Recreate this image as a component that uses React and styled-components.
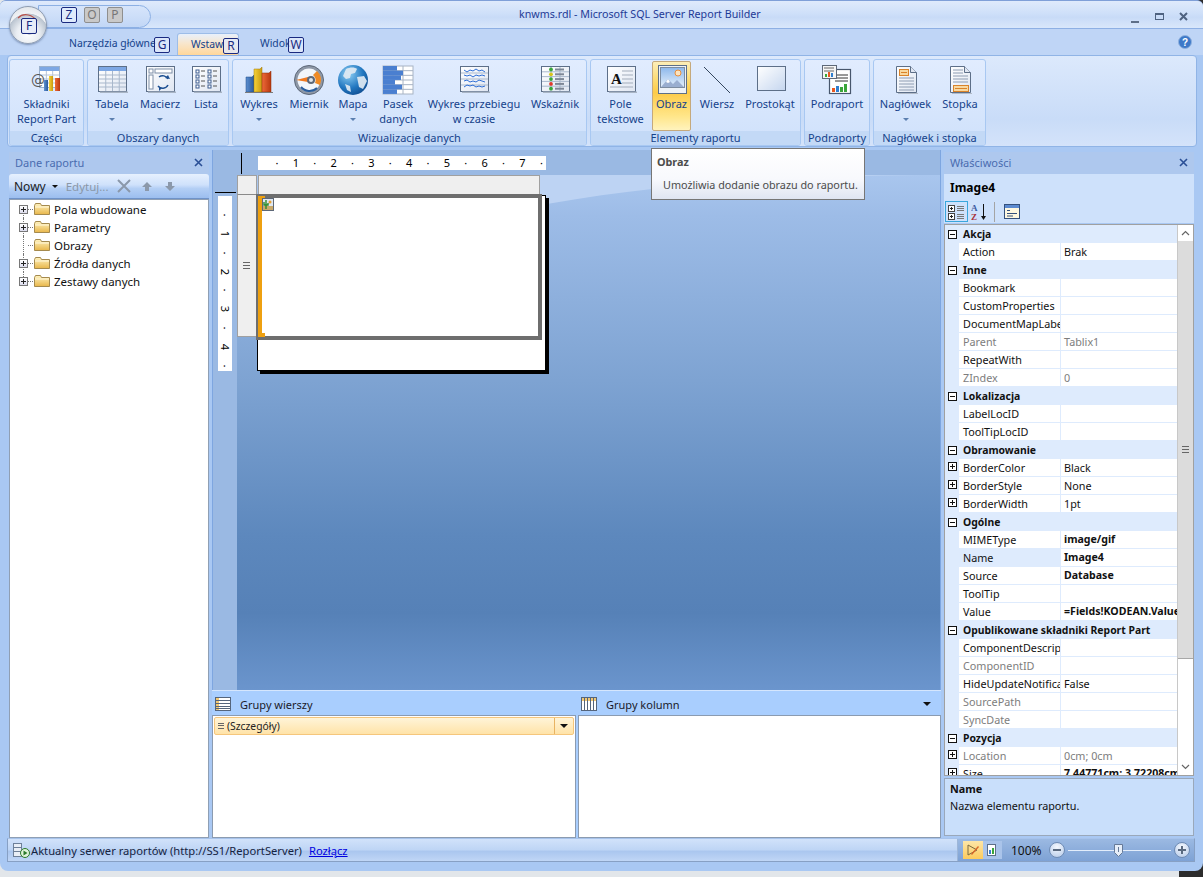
import React from 'react'
import styled, { createGlobalStyle } from 'styled-components'

const GlobalStyle = createGlobalStyle`
  html, body { margin: 0; padding: 0; background: linear-gradient(90deg, #e2e6ea 0, #e2e6ea 98%, #2c2c2c 98%); }
  body { font-family: "Noto Sans", "DejaVu Sans", sans-serif; font-size: 11px; overflow: hidden; }
  * { box-sizing: border-box; }
`

const Win = styled.div`
  width: 1203px;
  height: 871px;
  position: relative;
  overflow: hidden;
  background: #a9c8f3;
  border-radius: 6px 6px 8px 8px;
  border-top: 1px solid #7f9fd8;
  display: flex;
  flex-direction: column;
`

/* title bar */
const TitleBar = styled.div`
  height: 28px;
  flex: none;
  display: flex;
  background: linear-gradient(#dfeafc 0%, #cfe0f9 45%, #c8dbf7 60%, #d9e7fb 100%);
  border-bottom: 1px solid #8eb0e4;
`
const Qat = styled.div`
  margin: 4px 0 0 38px;
  width: 113px;
  height: 23px;
  border: 1px solid #8cb0e4;
  border-radius: 0 12px 12px 0;
  background: linear-gradient(#d7e5fb, #c2d7f6);
  display: flex;
  gap: 7px;
  padding: 1px 0 0 22px;
`
const KeyTip = styled.span`
  width: 16px;
  height: 16px;
  flex: none;
  display: flex;
  align-items: center;
  justify-content: center;
  font-size: 12px;
  line-height: 1;
  border: 1px solid ${p => (p.$off ? '#8f8f8f' : '#1a2a80')};
  border-radius: 2px;
  color: ${p => (p.$off ? '#777' : '#1a2a80')};
  background: ${p => (p.$off ? '#c9c9c9' : 'rgba(226,236,252,.85)')};
`
const OrbTip = styled(KeyTip)`
  position: absolute;
  left: 11px;
  top: 11px;
  background: rgba(232,236,248,.9);
`
const Orb = styled.div`
  position: absolute;
  left: 9px;
  top: 5px;
  width: 38px;
  height: 38px;
  border-radius: 50%;
  border: 1px solid #8e9cb0;
  background: radial-gradient(circle at 50% 75%, #ffffff 0%, #e9edf2 35%, #b9c3cf 62%, #f0f2f5 64%, #d8dde3 100%);
  box-shadow: 0 1px 2px rgba(60,80,120,.5);
  z-index: 3;
`
const TitleText = styled.div`
  margin: 5px 0 0 368px;
  width: 300px;
  font-size: 10.7px;
  line-height: 16px;
  color: #1e3a96;
  white-space: nowrap;
`
const WinButtons = styled.div`
  margin-left: auto;
  display: flex;
  gap: 12px;
  padding: 11px 13px 0 0;
`

/* tabs */
const TabStrip = styled.div`
  height: 26px;
  flex: none;
  display: flex;
  align-items: flex-end;
  padding: 0 11px 0 59px;
  background: #bfd5f6;
  position: relative;
`
const Tab = styled.div`
  position: relative;
  width: ${p => p.$w}px;
  height: 22px;
  padding: 3px 0 0 ${p => p.$pad}px;
  color: #15428b;
  font-size: 10.4px;
  line-height: 15px;
  white-space: nowrap;
  ${p => p.$active && `
    border: 1px solid #9dbde8;
    border-bottom: none;
    border-radius: 3px 3px 0 0;
    background: linear-gradient(#e8f0fc 0%, #f8e6cc 45%, #ffd79b 100%);
  `}
`
const TabTip = styled(KeyTip)`
  position: absolute;
  top: 4px;
  left: ${p => p.$x}px;
  background: rgba(226,234,250,.8);
`
const Help = styled.div`
  margin-left: auto;
  align-self: center;
`

/* ribbon */
const Ribbon = styled.div`
  height: 92px;
  flex: none;
  margin: 0 6px 0 7px;
  padding: 3px 0 0 1px;
  display: flex;
  gap: 3px;
  border: 1px solid #90b4e6;
  border-radius: 4px;
  background: linear-gradient(#dce9fc, #c9dcf8 70%, #d4e3fa);
`
const Group = styled.div`
  width: ${p => p.$w}px;
  height: 87px;
  flex: none;
  display: flex;
  flex-direction: column;
  border: 1px solid #a8c8f2;
  border-radius: 3px;
  background: linear-gradient(#e1ecfe, #cfe1fb);
  overflow: hidden;
`
const GroupBody = styled.div`
  flex: 1;
  display: flex;
  padding-top: 1px;
`
const GroupLabel = styled.div`
  height: 15px;
  flex: none;
  text-align: center;
  color: #15428b;
  font-size: 11px;
  line-height: 14px;
  background: #c3d9f6;
  white-space: nowrap;
`
const RibbonBtn = styled.div`
  width: ${p => p.$w}px;
  height: 70px;
  flex: none;
  margin-right: ${p => p.$mr || 0}px;
  display: flex;
  flex-direction: column;
  align-items: center;
  padding-top: 3px;
  color: #15428b;
  font-size: 11px;
  line-height: 15px;
  text-align: center;
  white-space: nowrap;
  ${p => p.$on && `
    border: 1px solid #c5a97c;
    border-radius: 2px;
    background: linear-gradient(#fdeeb8 0%, #fdd868 30%, #fdcb48 45%, #ffe68a 80%, #fff3bd 100%);
    padding-top: 2px;
  `}
`
const BtnIcon = styled.div`
  width: 32px;
  height: 32px;
  flex: none;
`
const Caret = styled.span`
  display: block;
  width: 0;
  height: 0;
  margin-top: 7px;
  border: 3px solid transparent;
  border-top: 3px solid #5b7faf;
  border-bottom: none;
`

/* main */
const Main = styled.div`
  height: 688px;
  flex: none;
  margin-top: 3px;
  padding-left: 9px;
  display: flex;
  gap: 3px;
`
const SidePanel = styled.div`
  width: ${p => p.$w}px;
  flex: none;
  display: flex;
  flex-direction: column;
`
const PanelHead = styled.div`
  height: 22px;
  margin-top: 2px;
  flex: none;
  display: flex;
  align-items: center;
  justify-content: space-between;
  padding: 0 6px 2px;
  color: #4a6cb0;
  font-size: 11px;
  background: #aec8ee;
`
const DataBar = styled.div`
  height: 25px;
  flex: none;
  display: flex;
  align-items: center;
  padding-left: 5px;
  border-radius: 3px 3px 0 0;
  border-bottom: 1px solid #6f93c9;
  background: linear-gradient(#e6f0fe 0%, #cfe1fb 45%, #b4cff5 60%, #9cbeef 100%);
  color: #1c1c1c;
  font-size: 12px;
`
const BarOff = styled.span`
  color: #8a97a8;
  font-size: 11.5px;
  margin: 0 ${p => p.$mr || 0}px 0 ${p => p.$ml || 0}px;
  display: flex;
`
const Tree = styled.div`
  flex: 1;
  background: #fff;
  border: 1px solid #8f9fb4;
`
const TreeRow = styled.div`
  height: 18px;
  display: flex;
  align-items: center;
  padding-left: 9px;
  color: #111;
  font-size: 11.5px;
  position: relative;
  &::before {
    content: '';
    position: absolute;
    left: 13px;
    top: ${p => (p.$first ? 9 : 0)}px;
    height: ${p => (p.$last || p.$first ? 9 : 18)}px;
    border-left: 1px dotted #777;
  }
`
const Expander = styled.span`
  width: 9px;
  height: 9px;
  flex: none;
  display: block;
  border: 1px solid #777;
  background: linear-gradient(#fff, #dde);
  position: relative;
  z-index: 1;
  visibility: ${p => (p.$hide ? 'hidden' : 'visible')};
  &::before { content: ''; position: absolute; left: 1px; top: 3px; width: 5px; height: 1px; background: #222; }
  &::after { content: ''; position: absolute; left: 3px; top: 1px; width: 1px; height: 5px; background: #222; }
`
const TreeDots = styled.span`
  width: 5px;
  border-top: 1px dotted #777;
`
const TreeLabel = styled.span`
  margin-left: 3px;
  white-space: nowrap;
`

/* centre */
const Centre = styled.div`
  width: 729px;
  flex: none;
  display: flex;
  flex-direction: column;
`
const Surface = styled.div`
  height: 540px;
  flex: none;
  display: flex;
  flex-direction: column;
  background: #9ab9e3;
  border-right: 1px solid #7ea6e0;
  border-left: 1px solid #7ea6e0;
`
const TopStrip = styled.div`
  height: 25px;
  flex: none;
  display: flex;
  align-items: flex-start;
`
const VMark = styled.div`
  width: 1px;
  height: 21px;
  margin: 3px 16px 0 28px;
  background: #000;
`
const HRuler = styled.div`
  width: 288px;
  height: 14px;
  margin-top: 6px;
  flex: none;
  overflow: hidden;
  background: #fff;
  display: flex;
  padding-left: 9.45px;
`
const Tick = styled.div`
  flex: none;
  width: 18.9px;
  height: 14px;
  display: flex;
  align-items: center;
  justify-content: center;
  font-size: 11px;
  line-height: 14px;
  color: #000;
`
const SurfaceBody = styled.div`
  flex: 1;
  display: flex;
`
const LeftStrip = styled.div`
  width: 24px;
  flex: none;
`
const HMark = styled.div`
  width: 21px;
  height: 1px;
  margin: 17px 0 3px 2px;
  background: #000;
`
const VRuler = styled.div`
  width: 14px;
  height: 175px;
  margin-left: 5px;
  overflow: hidden;
  background: #fff;
  padding-top: 9.45px;
`
const VTick = styled(Tick)`
  width: 14px;
  height: 18.9px;
  & > span { transform: rotate(90deg); display: block; }
`
const Canvas = styled.div`
  flex: 1;
  position: relative;
  background: linear-gradient(#a9c6ee 0%, #9dbce7 8%, #7ea3d2 40%, #5d88bd 70%, #5681b7 85%, #6b95cd 100%);
`
const Swoosh = styled.svg`
  position: absolute;
  left: 0;
  top: 0;
`
const ReportGrid = styled.div`
  position: relative;
  display: grid;
  grid-template-columns: 20px 289px;
  grid-template-rows: 20px 176px;
  width: 309px;
`
const Corner = styled.div`
  background: #efefef;
  border: 1px solid #a0a0a0;
  border-bottom-color: #8a8a8a;
`
const ColHead = styled.div`
  width: 282px;
  margin-left: 1px;
  background: #efefef;
  border: 1px solid #a0a0a0;
`
const RowHandle = styled.div`
  height: 142px;
  background: #efefef;
  border: 1px solid #a0a0a0;
  border-top: none;
  display: flex;
  align-items: center;
  justify-content: center;
  padding-right: 1px;
`
const Grip = styled.span`
  display: block;
  width: 7px;
  height: 7px;
  border-top: 1px solid #666;
  border-bottom: 1px solid #666;
  position: relative;
  &::after { content: ''; position: absolute; left: 0; right: 0; top: 2px; height: 1px; background: #666; }
`
const ReportPage = styled.div`
  position: relative;
  background: #fff;
  border: 1px solid #000;
  box-shadow: 3px 3px 0 #000;
  width: 289px;
  height: 176px;
`
const Selection = styled.div`
  position: absolute;
  left: -2px;
  top: -2px;
  width: 286px;
  height: 146px;
  border: 4px solid #6e6e6e;
  background: #fff;
`
const OrangeBar = styled.div`
  position: absolute;
  left: -2px;
  top: -2px;
  width: 4px;
  height: 141px;
  background: #eea010;
  &::before { content: ''; position: absolute; left: 0; top: 0; width: 7px; height: 4px; background: #eea010; }
  &::after { content: ''; position: absolute; left: 0; bottom: 0; width: 7px; height: 4px; background: #eea010; }
`
const PicMark = styled.svg`
  position: absolute;
  left: 2px;
  top: 0;
`

/* groups pane */
const GroupsPane = styled.div`
  height: 148px;
  flex: none;
  display: grid;
  grid-template-columns: 364px 363px;
  gap: 2px;
  background: #a9cefe;
  border-top: 1px solid #d5e6fd;
`
const GroupsCol = styled.div`
  display: flex;
  flex-direction: column;
  min-width: 0;
`
const GroupsHead = styled.div`
  height: 24px;
  flex: none;
  display: flex;
  align-items: center;
  padding: 2px 10px 0 3px;
  gap: 9px;
  color: #1a1a2a;
  font-size: 11px;
  position: relative;
`
const GroupsBox = styled.div`
  flex: 1;
  background: #fff;
  border: 1px solid #8b9bb0;
  padding: 1px;
`
const GroupItem = styled.div`
  height: 18px;
  display: flex;
  align-items: center;
  border: 1px solid #f5c67c;
  border-radius: 2px;
  background: linear-gradient(#fff4d8, #ffe3a8);
  color: #222;
  font-size: 10.3px;
  padding: 0 0 1px 3px;
  gap: 3px;
`
const ItemGrip = styled(Grip)`
  width: 6px;
  height: 6px;
  &::after { top: 1.5px; }
`
const ItemDrop = styled.span`
  margin-left: auto;
  width: 19px;
  height: 16px;
  border-left: 1px solid #e8b362;
  display: flex;
  align-items: center;
  justify-content: center;
`
const DownArrow = styled.span`
  display: block;
  width: 0;
  height: 0;
  border-left: ${p => p.$s || 4}px solid transparent;
  border-right: ${p => p.$s || 4}px solid transparent;
  border-top: ${p => p.$s || 4}px solid #111;
  margin-left: ${p => (p.$auto ? 'auto' : `${p.$ml || 0}px`)};
`

/* properties */
const PropName = styled.div`
  height: 26px;
  flex: none;
  display: flex;
  align-items: center;
  padding: 0 0 0 6px;
  font-weight: 700;
  font-size: 12px;
  color: #000;
  background: #cee1fb;
`
const PropTools = styled.div`
  height: 23px;
  flex: none;
  display: flex;
  align-items: center;
  padding-left: 1px;
  gap: 3px;
  background: #cee1fb;
`
const ToolActive = styled.div`
  width: 23px;
  height: 21px;
  border: 1px solid #3aa6dc;
  display: flex;
  align-items: center;
  justify-content: center;
`
const ToolSep = styled.span`
  width: 1px;
  height: 20px;
  background: #a4a4a4;
  margin: 0 6px 0 2px;
`
const GridFrame = styled.div`
  height: 552px;
  flex: none;
  margin-top: 1px;
  display: flex;
  border: 1px solid #a0a0a0;
  background: #fff;
  overflow: hidden;
`
const GridRows = styled.div`
  flex: 1;
  min-width: 0;
  overflow: hidden;
`
const CatRow = styled.div`
  height: 18px;
  display: flex;
  align-items: center;
  padding-left: 3px;
  background: #deebfd;
  font-weight: 700;
  font-size: 10.4px;
  color: #111;
  white-space: nowrap;
`
const PropRow = styled.div`
  height: 18px;
  display: flex;
  background: #deebfd;
  font-size: 10.8px;
  line-height: 17px;
`
const ExpCell = styled.div`
  width: 14px;
  flex: none;
  padding: 3px 0 0 3px;
`
const SquareBtn = styled.span`
  width: 9px;
  height: 9px;
  flex: none;
  display: block;
  position: relative;
  border: 1px solid #111;
  background: #fff;
  &::before { content: ''; position: absolute; left: 1px; top: 3px; width: 5px; height: 1px; background: #111; }
  ${p => p.$plus && `&::after { content: ''; position: absolute; left: 3px; top: 1px; width: 1px; height: 5px; background: #111; }`}
`
const CatLabel = styled.span`
  margin-left: 6px;
`
const NameCell = styled.div`
  width: 101px;
  flex: none;
  overflow: hidden;
  white-space: nowrap;
  padding-left: 4px;
  margin-bottom: 1px;
  background: ${p => (p.$sel ? '#deebfd' : '#fff')};
  color: ${p => (p.$dim ? '#7d7d7d' : '#111')};
`
const ValueCell = styled.div`
  flex: 1;
  min-width: 0;
  margin: 0 0 1px 1px;
  overflow: hidden;
  white-space: nowrap;
  padding-left: 3px;
  background: #fff;
  color: ${p => (p.$dim ? '#7d7d7d' : '#111')};
  font-weight: ${p => (p.$bold ? 700 : 400)};
  font-size: ${p => (p.$bold ? 10.6 : 10.8)}px;
`
const ScrollBar = styled.div`
  width: 16px;
  flex: none;
  display: flex;
  flex-direction: column;
  background: #fff;
  border-left: 1px solid #c8c8c8;
`
const ScrollBtn = styled.div`
  height: 16px;
  flex: none;
  display: flex;
  align-items: center;
  justify-content: center;
  background: #fff;
`
const ScrollThumb = styled.div`
  height: 418px;
  flex: none;
  background: #dcdcdc;
  border-bottom: 1px solid #a8a8a8;
  display: flex;
  align-items: center;
  justify-content: center;
`
const ScrollTrack = styled.div`
  flex: 1;
`
const HelpBox = styled.div`
  flex: 1;
  margin: 2px 0;
  border: 1px solid #9aa8ba;
  background: #c9dffb;
  padding: 1px 5px;
  color: #111;
  font-size: 10.8px;
  line-height: 17px;
`
const HelpTitle = styled.div`
  font-weight: 700;
`

/* status */
const StatusBar = styled.div`
  height: 24px;
  flex: none;
  margin: 0 8px 0 7px;
  display: flex;
  align-items: center;
  border: 1px solid #87a0c4;
  border-top-color: #a7c3eb;
  background: linear-gradient(#d1e2fa 0%, #bed5f5 50%, #aac6ef 55%, #c0d6f6 100%);
  color: #15233f;
  font-size: 11.2px;
  padding-left: 4px;
`
const StatusText = styled.span`
  margin-left: 1px;
  white-space: nowrap;
`
const StatusLink = styled.a`
  margin-left: 7px;
  color: #0000e0;
  text-decoration: underline;
  white-space: nowrap;
`
const ZoomArea = styled.div`
  margin-left: auto;
  width: 237px;
  height: 22px;
  display: flex;
  align-items: center;
  border-left: 1px solid #9db6d8;
  background: linear-gradient(#9bb9e2, #7ea2d5);
  padding: 0 4px 0 5px;
  color: #111;
`
const ViewBtns = styled.div`
  width: 39px;
  height: 18px;
  display: flex;
  background: #aac4ea;
`
const ViewBtn = styled.div`
  width: 20px;
  height: 18px;
  display: flex;
  align-items: center;
  justify-content: center;
  background: ${p => (p.$on ? 'linear-gradient(#fde6a8,#fccb5c)' : 'transparent')};
`
const ZoomPct = styled.span`
  margin-left: 9px;
  width: 38px;
  font-size: 12px;
`
const ZoomKnob = styled.span`
  width: 16px;
  height: 16px;
  flex: none;
  display: flex;
  align-items: center;
  justify-content: center;
  border-radius: 50%;
  border: 1px solid #6f8cb5;
  background: radial-gradient(circle at 50% 30%, #f4f8fe, #b4c9e8);
`
const ZoomTrack = styled.div`
  flex: 1;
  height: 1px;
  background: #e3edfb;
  margin: 0 3px;
  position: relative;
`
const ZoomThumb = styled.svg`
  position: absolute;
  left: 46px;
  top: -6px;
`

/* tooltip */
const Tooltip = styled.div`
  position: absolute;
  left: 651px;
  top: 147px;
  width: 214px;
  height: 52px;
  z-index: 5;
  border: 1px solid #767676;
  background: linear-gradient(#fff 0%, #f8f9fd 60%, #dfe5f2 100%);
  color: #4c4c4c;
  font-size: 10.8px;
  padding: 5px 5px;
`
const TipTitle = styled.div`
  font-weight: 700;
  line-height: 16px;
`
const TipText = styled.div`
  margin: 7px 0 0 6px;
  line-height: 16px;
  white-space: nowrap;
`

const Ic = ({ children, w = 32, h = 32, v }) => (
  <svg width={w} height={h} viewBox={v || `0 0 ${w} ${h}`} style={{ display: 'block' }}>{children}</svg>
)

const gridLines = (x, y, w, h, cols, rows, c) => {
  const out = []
  for (let i = 1; i < cols; i++) out.push(<line key={'c' + i} x1={x + (w * i) / cols} y1={y} x2={x + (w * i) / cols} y2={y + h} stroke={c} />)
  for (let i = 1; i < rows; i++) out.push(<line key={'r' + i} x1={x} y1={y + (h * i) / rows} x2={x + w} y2={y + (h * i) / rows} stroke={c} />)
  return out
}

const Defs = () => (
  <svg width="0" height="0" style={{ position: 'absolute' }}>
    <defs>
      <linearGradient id="pg" x1="0" y1="0" x2="1" y2="1"><stop offset="0" stopColor="#fff" /><stop offset="1" stopColor="#dfe6f2" /></linearGradient>
      <linearGradient id="bl" x1="0" y1="0" x2="1" y2="0"><stop offset="0" stopColor="#5c8fd0" /><stop offset="1" stopColor="#2a5a9c" /></linearGradient>
      <linearGradient id="ye" x1="0" y1="0" x2="1" y2="0"><stop offset="0" stopColor="#f6d23a" /><stop offset="1" stopColor="#c89a10" /></linearGradient>
      <linearGradient id="re" x1="0" y1="0" x2="1" y2="0"><stop offset="0" stopColor="#ee6a3a" /><stop offset="1" stopColor="#b8380f" /></linearGradient>
      <linearGradient id="fo" x1="0" y1="0" x2="0" y2="1"><stop offset="0" stopColor="#fff3c0" /><stop offset="1" stopColor="#e8b64a" /></linearGradient>
      <radialGradient id="gl" cx=".35" cy=".3" r=".8"><stop offset="0" stopColor="#8fd0f5" /><stop offset=".6" stopColor="#2277c0" /><stop offset="1" stopColor="#0f4a8c" /></radialGradient>
      <linearGradient id="sk" x1="0" y1="0" x2="0" y2="1"><stop offset="0" stopColor="#8db8ec" /><stop offset="1" stopColor="#e6f0fb" /></linearGradient>
      <linearGradient id="rc" x1="0" y1="0" x2="1" y2="1"><stop offset="0" stopColor="#fff" /><stop offset="1" stopColor="#c5d6ef" /></linearGradient>
    </defs>
  </svg>
)

const Sheet = ({ children }) => (
  <Ic>
    <rect x="2.5" y="2.5" width="28" height="25" fill="url(#pg)" stroke="#5d6f88" />
    <rect x="4" y="27.5" width="28" height="1.5" fill="#a8b4c4" />
    {children}
  </Ic>
)

const TableIcon = () => (
  <Sheet>
    <rect x="3" y="3" width="27" height="4" fill="#7da7e4" />
    {gridLines(3, 7, 27, 20, 4, 5, '#a9b8cc')}
  </Sheet>
)
const MatrixIcon = () => (
  <Sheet>
    <rect x="5" y="5" width="4" height="4" fill="#fff" stroke="#7f8fa8" />
    <rect x="11" y="5" width="17" height="4" fill="#fff" stroke="#7f8fa8" />
    <rect x="5" y="11" width="4" height="14" fill="#fff" stroke="#7f8fa8" />
    <path d="M14 22 a6 6 0 0 0 10 -1 M24 15 a6 6 0 0 0 -9 -2" fill="none" stroke="#1d4f91" strokeWidth="1.5" />
    <path d="M21 14l3 -3 2 4zM15 23l3 1 -3 3z" fill="#1d4f91" />
  </Sheet>
)
const ListIcon = () => (
  <Sheet>
    {[7, 12, 17, 22].map(y => (
      <g key={y}>
        <rect x="6" y={y - 1} width="3" height="3" fill="#fff" stroke="#3c5c90" />
        <line x1="11" y1={y} x2="15" y2={y} stroke="#555" />
        <rect x="18" y={y - 1} width="3" height="3" fill="#fff" stroke="#3c5c90" />
        <line x1="23" y1={y} x2="27" y2={y} stroke="#555" />
      </g>
    ))}
  </Sheet>
)
const BarsIcon = () => (
  <Ic>
    <path d="M3 13h6l2-2v17H3z" fill="url(#bl)" stroke="#1f4a85" strokeWidth=".5" />
    <path d="M11 5h6l2-2v25h-8z" fill="url(#ye)" stroke="#a07a08" strokeWidth=".5" />
    <path d="M19 9h7l2-2v21h-9z" fill="url(#re)" stroke="#8a2c0a" strokeWidth=".5" />
    <line x1="2" y1="28.5" x2="30" y2="28.5" stroke="#7a7a7a" />
  </Ic>
)
const PartIcon = () => (
  <Ic>
    <rect x="8.5" y="2.5" width="20" height="21" fill="#fff" stroke="#9ab0cc" />
    <rect x="9" y="3" width="19" height="4" fill="#7da7e4" />
    {gridLines(9, 7, 19, 16, 3, 4, '#b6c4d8')}
    <text x="0" y="21" fontFamily="DejaVu Sans" fontSize="14" fill="#555">@</text>
    <rect x="13" y="16" width="4" height="11" fill="url(#bl)" />
    <rect x="18" y="12" width="4" height="15" fill="url(#ye)" />
    <rect x="24" y="14" width="5" height="13" fill="url(#re)" />
  </Ic>
)
const GaugeIcon = () => (
  <Ic>
    <circle cx="16" cy="16" r="14.5" fill="#8d97a6" stroke="#5d6878" />
    <circle cx="16" cy="16" r="11.5" fill="#f2f6fb" />
    <path d="M24 7a12 12 0 0 1 3 14l-5-2a7 7 0 0 0-2-8z" fill="#ef8a24" />
    <path d="M3 16l12-3v5z" fill="#f07a20" />
    <circle cx="18" cy="16" r="4" fill="#5d6878" />
    <circle cx="18" cy="16" r="2" fill="#dfe5ec" />
    <path d="M8 23a11 11 0 0 0 16 1" stroke="#2a5d9c" strokeWidth="2" fill="none" />
  </Ic>
)
const GlobeIcon = () => (
  <Ic>
    <circle cx="16" cy="16" r="15" fill="url(#gl)" />
    <path d="M9 5c4-2 9-2 11 0l-2 4-4 1-1 4-4 1-3-3zM20 13l7-1 3 5-4 8-4-2-1-5zM8 20l5 2 1 6-4-2z" fill="#dfe9f2" opacity=".92" />
  </Ic>
)
const DataBarIcon = () => (
  <Ic>
    <rect x="1" y="2" width="30" height="28" fill="#fff" stroke="#a8b4c4" />
    {gridLines(1, 2, 30, 28, 3, 6, '#a8b4c4')}
    {[14, 20, 18, 12, 19, 14].map((e, i) => (
      <rect key={i} x={1} y={2 + i * 4.67} width={e} height={4.6} fill="#4a7fd0" />
    ))}
  </Ic>
)
const SparkIcon = () => (
  <Sheet>
    {gridLines(3, 3, 27, 24, 1, 4, '#a9b8cc')}
    <path d="M6 6l3 2 3-2 3 1 3-2 3 2 3-1 3 2M6 11l3 1 3-1 3 2 3-2 3 1 3-1 3 1M6 17l3-1 3 2 3-1 3 1 3-2 3 1 3 1M6 23l3-2 3 1 3-1 3 2 3-1 3 1 3-1" fill="none" stroke="#2f6fd6" />
  </Sheet>
)
const KpiIcon = () => (
  <Sheet>
    {gridLines(3, 3, 27, 24, 3, 5, '#a9b8cc')}
    {['#3aa63a', '#d8c41c', '#3aa63a', '#e03a2a', '#3aa63a'].map((c, i) => (
      <g key={i}>
        <circle cx="12" cy={5.5 + i * 4.8} r="1.9" fill={c} />
        <rect x="16" y={4.5 + i * 4.8} width="9" height="2" fill="#7d8796" />
      </g>
    ))}
  </Sheet>
)
const TextBoxIcon = () => (
  <Sheet>
    <text x="6" y="20" fontFamily="Liberation Serif" fontWeight="700" fontSize="15" fill="#111">A</text>
    {[7, 11, 15, 19, 23].map(y => <line key={y} x1={y > 19 ? 5 : 17} y1={y} x2="28" y2={y} stroke="#a3adbb" />)}
  </Sheet>
)
const ImageIcon = () => (
  <Ic>
    <rect x="2.5" y="1.5" width="28" height="28" fill="#eef2f7" stroke="#5d6f88" />
    <rect x="4.5" y="3.5" width="24" height="20" fill="url(#sk)" stroke="#7d8ca0" />
    <circle cx="22" cy="9" r="3" fill="#fbe3c0" stroke="#e98f3c" />
    <path d="M5 23l7-8 5 5 4-4 7 7z" fill="#9aaed0" />
    <path d="M12 15l2 3-2 1-2-1z" fill="#fff" />
  </Ic>
)
const LineIcon = () => <Ic><line x1="3" y1="3" x2="29" y2="29" stroke="#34465e" /></Ic>
const RectIcon = () => (
  <Ic>
    <rect x="3.5" y="2.5" width="28" height="24" fill="url(#rc)" stroke="#5d6f88" />
  </Ic>
)
const SubIcon = () => (
  <Ic>
    <rect x="8.5" y="5.5" width="21" height="24" fill="#fff" stroke="#47566c" strokeWidth="1.2" />
    {[11, 14, 17].map(y => <line key={y} x1="14" y1={y} x2="27" y2={y} stroke="#333" />)}
    <rect x="11" y="24" width="3" height="4" fill="#e85820" />
    <rect x="15" y="22" width="3" height="6" fill="#2f7fd0" />
    <rect x="19" y="23" width="3" height="5" fill="#3aa63a" />
    <rect x="23" y="20" width="3" height="8" fill="#3aa63a" />
    <rect x="1.5" y="1.5" width="14" height="13" fill="#f5f5f5" stroke="#5d6878" />
    {[4, 7].map(y => <line key={y} x1="3" y1={y} x2="13" y2={y} stroke="#666" />)}
    <rect x="4" y="10" width="2" height="3" fill="#3aa63a" /><rect x="7" y="8" width="2" height="5" fill="#e85820" /><rect x="10" y="9" width="2" height="4" fill="#2f7fd0" />
  </Ic>
)
const Doc = ({ children }) => (
  <Ic>
    <path d="M6.5 2.5h14l6 6v20h-20z" fill="url(#pg)" stroke="#5d6f88" />
    <path d="M20.5 2.5v6h6" fill="#dfe6f2" stroke="#5d6f88" />
    <rect x="8" y="29" width="20" height="1" fill="#b1bbc9" />
    {children}
  </Ic>
)
const HeaderIcon = () => (
  <Doc>
    <rect x="9.5" y="5.5" width="9" height="6" fill="#f8d8a0" stroke="#d9832a" />
    <line x1="11" y1="8.5" x2="17" y2="8.5" stroke="#d9832a" />
    {[14, 17, 20, 23, 26].map(y => <line key={y} x1="9" y1={y} x2="24" y2={y} stroke="#8d9cb2" />)}
  </Doc>
)
const FooterIcon = () => (
  <Doc>
    {[6, 9, 12, 15, 18].map(y => <line key={y} x1="9" y1={y} x2={y < 10 ? 19 : 24} y2={y} stroke="#8d9cb2" />)}
    <rect x="9.5" y="21.5" width="15" height="6" fill="#f8d8a0" stroke="#d9832a" />
    <line x1="11" y1="24.5" x2="23" y2="24.5" stroke="#d9832a" />
  </Doc>
)

const RBtn = ({ w, mr, icon, label, line2, caret, on }) => (
  <RibbonBtn $w={w} $mr={mr} $on={on}>
    <BtnIcon>{icon}</BtnIcon>
    <span>{label}</span>
    {line2 && <span>{line2}</span>}
    {caret && <Caret />}
  </RibbonBtn>
)

const Folder = () => (
  <Ic w={18} h={14}>
    <path d="M1.5 3.5l1-2h5l1 2h8v9h-15z" fill="url(#fo)" stroke="#a58a4e" />
    <path d="M2 5h14" stroke="#fff8dc" />
  </Ic>
)

const treeItems = [
  { label: 'Pola wbudowane', first: true },
  { label: 'Parametry' },
  { label: 'Obrazy', leaf: true },
  { label: 'Źródła danych' },
  { label: 'Zestawy danych', last: true },
]

const props = [
  { cat: 'Akcja' },
  { n: 'Action', v: 'Brak' },
  { cat: 'Inne' },
  { n: 'Bookmark' },
  { n: 'CustomProperties' },
  { n: 'DocumentMapLabel' },
  { n: 'Parent', v: 'Tablix1', dim: true },
  { n: 'RepeatWith' },
  { n: 'ZIndex', v: '0', dim: true },
  { cat: 'Lokalizacja' },
  { n: 'LabelLocID' },
  { n: 'ToolTipLocID' },
  { cat: 'Obramowanie' },
  { n: 'BorderColor', v: 'Black', plus: true },
  { n: 'BorderStyle', v: 'None', plus: true },
  { n: 'BorderWidth', v: '1pt', plus: true },
  { cat: 'Ogólne' },
  { n: 'MIMEType', v: 'image/gif', bold: true },
  { n: 'Name', v: 'Image4', bold: true, sel: true },
  { n: 'Source', v: 'Database', bold: true },
  { n: 'ToolTip' },
  { n: 'Value', v: '=Fields!KODEAN.Value', bold: true },
  { cat: 'Opublikowane składniki Report Part' },
  { n: 'ComponentDescription' },
  { n: 'ComponentID', dim: true },
  { n: 'HideUpdateNotifications', v: 'False' },
  { n: 'SourcePath', dim: true },
  { n: 'SyncDate', dim: true },
  { cat: 'Pozycja' },
  { n: 'Location', v: '0cm; 0cm', plus: true, dim: true },
  { n: 'Size', v: '7,44771cm; 3,72208cm', plus: true, bold: true },
]

const rulerMarks = ['·', '1', '·', '2', '·', '3', '·', '4', '·', '5', '·', '6', '·', '7', '·']
const vRulerMarks = ['·', '1', '·', '2', '·', '3', '·', '4', '·']

const CloseX = () => (
  <Ic w={9} h={9}><path d="M1 1l7 7M8 1l-7 7" stroke="#2a4f96" strokeWidth="1.6" /></Ic>
)

export default function App() {
  return (
    <Win>
      <GlobalStyle />
      <Defs />
      <Orb>
        <svg width="36" height="36" style={{ position: 'absolute', left: 0, top: 0 }}>
          <path d="M8 11c6-6 15-3 19 3" fill="none" stroke="#b9524a" strokeWidth="1.2" />
          <path d="M11 22c4 6 10 6 15 2" fill="none" stroke="#8e99a8" strokeWidth="1.2" />
        </svg>
        <OrbTip>F</OrbTip>
      </Orb>
      <TitleBar>
        <Qat>
          <KeyTip>Z</KeyTip>
          <KeyTip $off>O</KeyTip>
          <KeyTip $off>P</KeyTip>
        </Qat>
        <TitleText>knwms.rdl - Microsoft SQL Server Report Builder</TitleText>
        <WinButtons>
          <Ic w={12} h={12}><rect x="1" y="9" width="8" height="2" fill="#5e6f88" /></Ic>
          <Ic w={12} h={12}><rect x="1.5" y="1.5" width="8" height="6" fill="none" stroke="#4e6280" /><rect x="1" y="1" width="9" height="2" fill="#4e6280" /></Ic>
          <Ic w={12} h={12}><path d="M2 1l7 7M9 1l-7 7" stroke="#4e6280" strokeWidth="2" /></Ic>
        </WinButtons>
      </TitleBar>

      <TabStrip>
        <Tab $w={118} $pad={10}>Narzędzia główne<TabTip $x={95}>G</TabTip></Tab>
        <Tab $w={62} $pad={13} $active>Wstaw<TabTip $x={45}>R</TabTip></Tab>
        <Tab $w={70} $pad={21}>Widok<TabTip $x={49}>W</TabTip></Tab>
        <Help>
          <Ic w={14} h={14}>
            <circle cx="7" cy="7" r="6.5" fill="#3d78c8" stroke="#8fb0dd" />
            <text x="4" y="11" fontFamily="Liberation Sans" fontWeight="700" fontSize="10" fill="#fff">?</text>
          </Ic>
        </Help>
      </TabStrip>

      <Ribbon>
        <Group $w={75}>
          <GroupBody><RBtn w={73} icon={<PartIcon />} label="Składniki" line2="Report Part" /></GroupBody>
          <GroupLabel>Części</GroupLabel>
        </Group>
        <Group $w={142}>
          <GroupBody>
            <RBtn w={48} icon={<TableIcon />} label="Tabela" caret />
            <RBtn w={48} icon={<MatrixIcon />} label="Macierz" caret />
            <RBtn w={44} icon={<ListIcon />} label="Lista" />
          </GroupBody>
          <GroupLabel>Obszary danych</GroupLabel>
        </Group>
        <Group $w={355}>
          <GroupBody>
            <RBtn w={52} icon={<BarsIcon />} label="Wykres" caret />
            <RBtn w={48} icon={<GaugeIcon />} label="Miernik" />
            <RBtn w={40} icon={<GlobeIcon />} label="Mapa" caret />
            <RBtn w={50} icon={<DataBarIcon />} label="Pasek" line2="danych" />
            <RBtn w={102} icon={<SparkIcon />} label="Wykres przebiegu" line2="w czasie" />
            <RBtn w={60} icon={<KpiIcon />} label="Wskaźnik" />
          </GroupBody>
          <GroupLabel>Wizualizacje danych</GroupLabel>
        </Group>
        <Group $w={211}>
          <GroupBody>
            <RBtn w={59} mr={2} icon={<TextBoxIcon />} label="Pole" line2="tekstowe" />
            <RBtn w={39} icon={<ImageIcon />} label="Obraz" on />
            <RBtn w={52} icon={<LineIcon />} label="Wiersz" />
            <RBtn w={54} icon={<RectIcon />} label="Prostokąt" />
          </GroupBody>
          <GroupLabel>Elementy raportu</GroupLabel>
        </Group>
        <Group $w={66}>
          <GroupBody><RBtn w={64} icon={<SubIcon />} label="Podraport" /></GroupBody>
          <GroupLabel>Podraporty</GroupLabel>
        </Group>
        <Group $w={113}>
          <GroupBody>
            <RBtn w={63} icon={<HeaderIcon />} label="Nagłówek" caret />
            <RBtn w={46} icon={<FooterIcon />} label="Stopka" caret />
          </GroupBody>
          <GroupLabel>Nagłówek i stopka</GroupLabel>
        </Group>
      </Ribbon>

      <Tooltip>
        <TipTitle>Obraz</TipTitle>
        <TipText>Umożliwia dodanie obrazu do raportu.</TipText>
      </Tooltip>

      <Main>
        <SidePanel $w={200}>
          <PanelHead>Dane raportu<CloseX /></PanelHead>
          <DataBar>
            <span>Nowy</span>
            <DownArrow $s={3} $ml={6} />
            <BarOff $ml={8} $mr={8}>Edytuj...</BarOff>
            <BarOff $mr={8}><Ic w={14} h={14}><path d="M1 1l12 12M13 1l-12 12" stroke="#8b98aa" strokeWidth="2" /></Ic></BarOff>
            <BarOff $mr={7}><Ic w={16} h={12}><path d="M8 2l5 5h-3v4h-4v-4h-3z" fill="#8b98aa" /></Ic></BarOff>
            <BarOff><Ic w={16} h={12}><path d="M8 11l5-5h-3v-4h-4v4h-3z" fill="#8b98aa" /></Ic></BarOff>
          </DataBar>
          <Tree>
            {treeItems.map(t => (
              <TreeRow key={t.label} $first={t.first} $last={t.last}>
                <Expander $hide={t.leaf} />
                <TreeDots />
                <Folder />
                <TreeLabel>{t.label}</TreeLabel>
              </TreeRow>
            ))}
          </Tree>
        </SidePanel>

        <Centre>
          <Surface>
            <TopStrip>
              <VMark />
              <HRuler>
                {rulerMarks.map((m, i) => <Tick key={i}>{m}</Tick>)}
              </HRuler>
            </TopStrip>
            <SurfaceBody>
              <LeftStrip>
                <HMark />
                <VRuler>
                  {vRulerMarks.map((m, i) => <VTick key={i}><span>{m}</span></VTick>)}
                </VRuler>
              </LeftStrip>
              <Canvas>
                <Swoosh width="704" height="40">
                  <path d="M0 0H704V0C600 0 450 4 310 29L300 30V0Z" fill="#bdd3f3" />
                </Swoosh>
                <ReportGrid>
                  <Corner />
                  <ColHead />
                  <RowHandle><Grip /></RowHandle>
                  <ReportPage>
                    <Selection>
                      <OrangeBar />
                      <PicMark width="12" height="13">
                        <rect x=".5" y=".5" width="11" height="12" fill="#dfe8f2" stroke="#5d6878" />
                        <rect x="1" y="8" width="10" height="4" fill="#c9a96a" />
                        <circle cx="8" cy="4" r="1.5" fill="#e8a030" />
                        <path d="M4 2v9M2 4v3h2M6 5v2h-2" stroke="#2b8a2b" strokeWidth="1.4" fill="none" />
                      </PicMark>
                    </Selection>
                  </ReportPage>
                </ReportGrid>
              </Canvas>
            </SurfaceBody>
          </Surface>
          <GroupsPane>
            <GroupsCol>
              <GroupsHead>
                <Ic w={16} h={14}>
                  <rect x=".5" y=".5" width="15" height="13" fill="#fff" stroke="#55657c" />
                  <rect x="1" y="1" width="3" height="12" fill="#f2c874" />
                  {[3, 6, 9, 11].map(y => <line key={y} x1="1" y1={y + .5} x2="15" y2={y + .5} stroke="#55657c" />)}
                </Ic>
                <span>Grupy wierszy</span>
              </GroupsHead>
              <GroupsBox>
                <GroupItem>
                  <ItemGrip />
                  <span>(Szczegóły)</span>
                  <ItemDrop><DownArrow /></ItemDrop>
                </GroupItem>
              </GroupsBox>
            </GroupsCol>
            <GroupsCol>
              <GroupsHead>
                <Ic w={16} h={14}>
                  <rect x=".5" y=".5" width="15" height="13" fill="#fff" stroke="#55657c" />
                  <rect x="1" y="1" width="14" height="3" fill="#f2c874" />
                  {[3, 6, 9, 12].map(x => <line key={x} x1={x + .5} y1="1" x2={x + .5} y2="13" stroke="#55657c" />)}
                </Ic>
                <span>Grupy kolumn</span>
                <DownArrow $auto />
              </GroupsHead>
              <GroupsBox />
            </GroupsCol>
          </GroupsPane>
        </Centre>

        <SidePanel $w={250}>
          <PanelHead>Właściwości<CloseX /></PanelHead>
          <PropName>Image4</PropName>
          <PropTools>
            <ToolActive>
              <Ic w={17} h={16}>
                <rect x=".5" y="1.5" width="6" height="6" fill="#fff" stroke="#444" />
                <rect x=".5" y="9.5" width="6" height="6" fill="#fff" stroke="#444" />
                <path d="M2 4.5h3M3.5 3v3M2 12.5h3M3.5 11v3" stroke="#222" />
                {[2, 4, 6, 10, 12, 14].map(y => <line key={y} x1="9" y1={y + .5} x2="16" y2={y + .5} stroke="#777" />)}
              </Ic>
            </ToolActive>
            <Ic w={18} h={18}>
              <text x="0" y="8" fontFamily="Liberation Serif" fontWeight="700" fontSize="9" fill="#3a5aa0">A</text>
              <text x="0" y="17" fontFamily="Liberation Serif" fontWeight="700" fontSize="9" fill="#a8323a">Z</text>
              <path d="M12.5 1v14" stroke="#111" />
              <path d="M10 13l2.5 4 2.5-4z" fill="#111" />
            </Ic>
            <ToolSep />
            <Ic w={16} h={15}>
              <rect x=".5" y=".5" width="15" height="14" fill="#fff8e0" stroke="#34507c" />
              <rect x="1" y="1" width="14" height="3" fill="#5c8ad0" />
              <path d="M3 6.5h3M3 9.5h10M3 12h6" stroke="#34507c" />
            </Ic>
          </PropTools>
          <GridFrame>
            <GridRows>
              {props.map(p => p.cat ? (
                <CatRow key={p.cat}><SquareBtn /><CatLabel>{p.cat}</CatLabel></CatRow>
              ) : (
                <PropRow key={p.n}>
                  <ExpCell>{p.plus && <SquareBtn $plus />}</ExpCell>
                  <NameCell $dim={p.dim} $sel={p.sel}>{p.n}</NameCell>
                  <ValueCell $dim={p.dim} $bold={p.bold}>{p.v}</ValueCell>
                </PropRow>
              ))}
            </GridRows>
            <ScrollBar>
              <ScrollBtn><Ic w={9} h={6}><path d="M1 5l3.5-3.5L8 5" fill="none" stroke="#666" strokeWidth="1.2" /></Ic></ScrollBtn>
              <ScrollThumb><Grip /></ScrollThumb>
              <ScrollTrack />
              <ScrollBtn><Ic w={9} h={6}><path d="M1 1l3.5 3.5L8 1" fill="none" stroke="#666" strokeWidth="1.2" /></Ic></ScrollBtn>
            </ScrollBar>
          </GridFrame>
          <HelpBox>
            <HelpTitle>Name</HelpTitle>
            <div>Nazwa elementu raportu.</div>
          </HelpBox>
        </SidePanel>
      </Main>

      <StatusBar>
        <Ic w={18} h={16}>
          <rect x="1.5" y="1.5" width="8" height="13" fill="#e8eef6" stroke="#6d7f98" />
          <path d="M2 5.5h7M2 9.5h7" stroke="#6d7f98" />
          <circle cx="13" cy="11" r="4.5" fill="#dff3d8" stroke="#2b7a2b" />
          <path d="M11.5 8.5l4 2.5-4 2.5z" fill="#2b7a2b" />
        </Ic>
        <StatusText>Aktualny serwer raportów (http://SS1/ReportServer)</StatusText>
        <StatusLink>Rozłącz</StatusLink>
        <ZoomArea>
          <ViewBtns>
            <ViewBtn $on>
              <Ic w={14} h={14}><path d="M2 2l9 5-9 5z" fill="none" stroke="#7a6a40" /><path d="M5 11l7-8 1 1-7 8z" fill="#d8682a" /></Ic>
            </ViewBtn>
            <ViewBtn>
              <Ic w={12} h={13}><rect x="1.5" y=".5" width="8" height="11" fill="#fff" stroke="#5d6f88" /><rect x="3" y="6" width="2" height="4" fill="#3a7fd0" /><rect x="6" y="4" width="2" height="6" fill="#3aa63a" /></Ic>
            </ViewBtn>
          </ViewBtns>
          <ZoomPct>100%</ZoomPct>
          <ZoomKnob><Ic w={8} h={8}><rect y="3" width="8" height="2" fill="#5a6a80" /></Ic></ZoomKnob>
          <ZoomTrack>
            <ZoomThumb width="9" height="13">
              <path d="M.5.5h8v8l-4 4-4-4z" fill="#e6eef9" stroke="#667a98" />
              <line x1="4.5" y1="3" x2="4.5" y2="8" stroke="#667a98" />
            </ZoomThumb>
          </ZoomTrack>
          <ZoomKnob><Ic w={8} h={8}><path d="M0 3h3V0h2v3h3v2H5v3H3V5H0z" fill="#5a6a80" /></Ic></ZoomKnob>
        </ZoomArea>
      </StatusBar>
    </Win>
  )
}
